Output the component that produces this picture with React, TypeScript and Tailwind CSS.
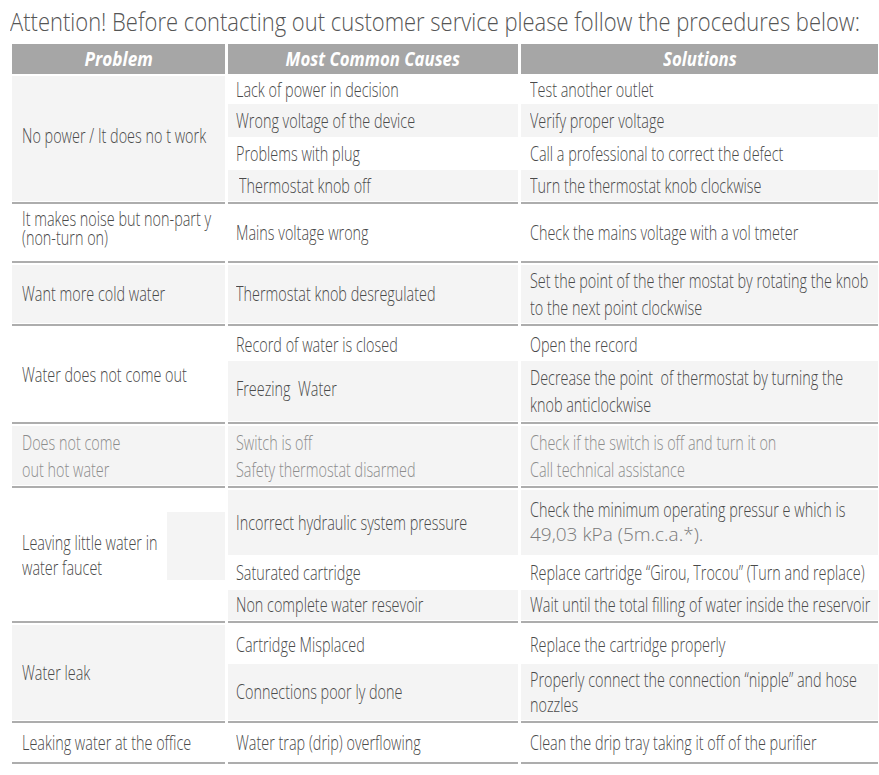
import React from 'react';

type Sub = {
  cause: React.ReactNode;
  solution: React.ReactNode;
  h: string;
  shade?: boolean;
  causeCls?: string;
};

type Group = {
  problem: React.ReactNode;
  shade?: boolean;
  muted?: boolean;
  patch?: boolean;
  subs: Sub[];
};

const shadeBg = 'bg-[#f4f4f4]';

// condensed look: the light face squeezed sideways
const T = ({ children, className = '' }: { children: React.ReactNode; className?: string }) => (
  <span className={`inline-block whitespace-pre origin-left scale-x-[0.72] ${className}`}>{children}</span>
);

const groups: Group[] = [
  {
    problem: <T className="relative -top-[3px]">No power / It does no t work</T>,
    shade: true,
    subs: [
      { cause: <T>Lack of power in decision</T>, solution: <T>Test another outlet</T>, h: 'h-[28px]' },
      { cause: <T>Wrong voltage of the device</T>, solution: <T>Verify proper voltage</T>, h: 'h-[33px]', shade: true },
      { cause: <T>Problems with plug</T>, solution: <T>Call a professional to correct the defect</T>, h: 'h-[33px]' },
      { cause: <T>Thermostat knob off</T>, solution: <T>Turn the thermostat knob clockwise</T>, h: 'h-[31px]', shade: true, causeCls: 'pl-[11px]' },
    ],
  },
  {
    problem: (
      <T className="leading-[19px] -mt-[8px]">
        It makes noise but non-part y
        <br />
        (non-turn on)
      </T>
    ),
    subs: [{ cause: <T>Mains voltage wrong</T>, solution: <T>Check the mains voltage with a vol tmeter</T>, h: 'h-[54px]' }],
  },
  {
    problem: <T className="-mt-[3px]">Want more cold water</T>,
    shade: true,
    subs: [
      {
        cause: <T>Thermostat knob desregulated</T>,
        solution: (
          <T className="leading-[27px]">
            Set the point of the ther mostat by rotating the knob
            <br />
            to the next point clockwise
          </T>
        ),
        h: 'h-[58px]',
        shade: true,
      },
    ],
  },
  {
    problem: <T className="-mt-[5px]">Water does not come out</T>,
    subs: [
      { cause: <T>Record of water is closed</T>, solution: <T>Open the record</T>, h: 'h-[33px]' },
      {
        cause: <T className="-mt-[4px]">Freezing  Water</T>,
        solution: (
          <T className="leading-[27px]">
            Decrease the point&nbsp; of thermostat by turning the
            <br />
            knob anticlockwise
          </T>
        ),
        h: 'h-[60px]',
        shade: true,
      },
    ],
  },
  {
    problem: (
      <T className="leading-[27px]">
        Does not come
        <br />
        out hot water
      </T>
    ),
    shade: true,
    muted: true,
    subs: [
      {
        cause: (
          <T className="leading-[27px]">
            Switch is off
            <br />
            Safety thermostat disarmed
          </T>
        ),
        solution: (
          <T className="leading-[27px]">
            Check if the switch is off and turn it on
            <br />
            Call technical assistance
          </T>
        ),
        h: 'h-[59px]',
        shade: true,
      },
    ],
  },
  {
    problem: (
      <T className="leading-[25px]">
        Leaving little water in
        <br />
        water faucet
      </T>
    ),
    patch: true,
    subs: [
      {
        cause: <T>Incorrect hydraulic system pressure</T>,
        solution: (
          <div className="flex flex-col -mt-[2px]">
            <T className="leading-[24px]">Check the minimum operating pressur e which is</T>
            <span className="whitespace-pre text-[19px] leading-[24px] text-[#7a7a7a]">49,03 kPa (5m.c.a.*).</span>
          </div>
        ),
        h: 'h-[65px]',
        shade: true,
      },
      { cause: <T>Saturated cartridge</T>, solution: <T>Replace cartridge {'\u201cGirou, Trocou\u201d'} (Turn and replace)</T>, h: 'h-[35px]' },
      { cause: <T>Non complete water resevoir</T>, solution: <T>Wait until the total filling of water inside the reservoir</T>, h: 'h-[30px]', shade: true },
    ],
  },
  {
    problem: <T>Water leak</T>,
    shade: true,
    subs: [
      { cause: <T>Cartridge Misplaced</T>, solution: <T>Replace the cartridge properly</T>, h: 'h-[39px]' },
      {
        cause: <T>Connections poor ly done</T>,
        solution: (
          <T className="leading-[25px]">
            Properly connect the connection {'\u201cnipple\u201d'} and hose
            <br />
            nozzles
          </T>
        ),
        h: 'h-[56px]',
        shade: true,
      },
    ],
  },
  {
    problem: <T>Leaking water at the office</T>,
    subs: [{ cause: <T>Water trap (drip) overflowing</T>, solution: <T>Clean the drip tray taking it off of the purifier</T>, h: 'h-[36px]' }],
  },
];

const Rule = () => (
  <div className="flex gap-x-[3px] mt-[1px] mb-[2px]">
    <div className="w-[213px] h-[2px] bg-[#adadad]" />
    <div className="w-[290px] h-[2px] bg-[#adadad]" />
    <div className="w-[357px] h-[2px] bg-[#adadad]" />
  </div>
);

const GroupBlock = ({ g }: { g: Group }) => (
  <div className={`flex gap-x-[3px] ${g.muted ? 'text-[#8c8c8c]' : 'text-[#4a4a4a]'}`}>
    <div className={`relative w-[213px] flex items-center pl-[10px] ${g.shade ? shadeBg : ''}`}>
      {g.patch && <div className={`absolute right-0 top-[22px] w-[58px] h-[68px] ${shadeBg}`} />}
      <div className="relative">{g.problem}</div>
    </div>
    <div className="flex flex-col">
      {g.subs.map((s, i) => (
        <div key={i} className={`flex gap-x-[3px] ${s.h}`}>
          <div className={`w-[290px] flex items-center ${s.causeCls ?? 'pl-[8px]'} ${s.shade ? shadeBg : ''}`}>
            {s.cause}
          </div>
          <div className={`w-[357px] flex items-center pl-[9px] ${s.shade ? shadeBg : ''}`}>
            {s.solution}
          </div>
        </div>
      ))}
    </div>
  </div>
);

export default function App() {
  return (
    <div className="w-[879px] h-[775px] overflow-hidden bg-white pl-[10px] font-['Open_Sans','Noto_Sans',sans-serif] font-light">
      <div className="h-[44px] pt-[4px] text-[26px] leading-[34px] text-[#555] whitespace-nowrap">
        <span className="inline-block origin-left scale-x-[0.845]">
          Attention! Before contacting out customer service please follow the procedures below:
        </span>
      </div>

      <div className="ml-[2px] text-[20px] leading-[22px]">
        <div className="flex gap-x-[3px] h-[30px] mb-[2px] text-white font-bold italic">
          <div className="w-[213px] bg-[#a6a6a6] flex items-center justify-center">
            <span className="inline-block scale-x-[0.86]">Problem</span>
          </div>
          <div className="w-[290px] bg-[#a6a6a6] flex items-center justify-center">
            <span className="inline-block whitespace-pre scale-x-[0.84]">Most Common Causes</span>
          </div>
          <div className="w-[357px] bg-[#a6a6a6] flex items-center justify-center">
            <span className="inline-block scale-x-[0.84]">Solutions</span>
          </div>
        </div>

        {groups.map((g, i) => (
          <React.Fragment key={i}>
            <GroupBlock g={g} />
            <Rule />
          </React.Fragment>
        ))}
      </div>
    </div>
  );
}
